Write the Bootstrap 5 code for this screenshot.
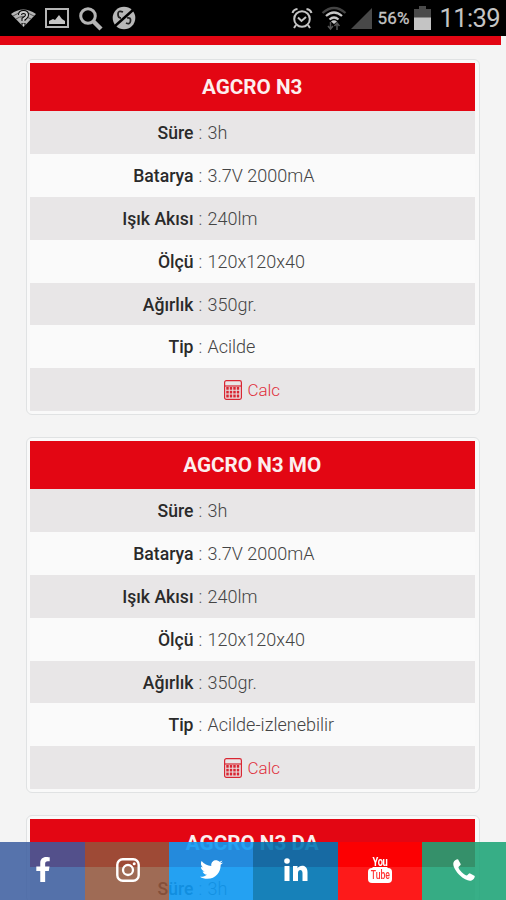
<!DOCTYPE html>
<html lang="tr">
<head>
<meta charset="utf-8">
<meta name="viewport" content="width=device-width, initial-scale=1">
<title>AGCRO</title>
<link href="https://cdn.jsdelivr.net/npm/bootstrap@5.3.0/dist/css/bootstrap.min.css" rel="stylesheet">
<style>
html,body{height:900px;overflow:hidden}
body{background:#f4f4f4;font-family:Roboto,"Liberation Sans",sans-serif;color:#555}
.statusbar{height:36px;background:#000;color:#c4c4c4;padding:0 6px 0 11px}
.statusbar svg{display:block;flex:none}
.pct{font-size:17px;line-height:36px;letter-spacing:.2px;margin-left:5px;width:37px;-webkit-text-stroke:.3px}
.clock{font-size:25.5px;line-height:33px;letter-spacing:-.6px;margin-left:8px}
.strip{height:8.5px;width:501px;background:#e30613}
.products{height:855.5px;overflow:hidden;padding:14.5px 26px 0;gap:22px}
.product{border:1.5px solid #e0e2e3;border-radius:6px;padding:3px 4px 1.5px 2.5px;background:#f9f9f9;height:356px;flex:none}
.product.partial{height:88px}
.product h2{height:48px;line-height:48px;font-size:20.7px;font-weight:700;color:#fceeee;background:#e30613;margin:0}
.spec{height:42.9px;font-size:18px;line-height:44.5px;background:#fafafa}
.spec:nth-child(even){background:#e8e6e7}
.spec dt{width:164px;font-weight:500;font-size:17.6px;color:#2a2a2a;text-align:right}
.spec .colon{width:14px;padding-left:5px;font-weight:300}
.spec dd{margin:0;font-weight:300;color:#444}
.calc{color:#e0303c;font-weight:300;gap:5px;text-decoration:none;font-size:17px}
.partial .spec{height:33px;overflow:hidden}
.social{height:58.5px}
.social a{flex:1 1 0;color:#fff;padding:0 0 2px 1px}
.social a:first-child{flex:0 0 85px}
.fb{background:rgba(59,93,160,.86)}
.ig{background:rgba(147,86,60,.86)}
.tw{background:rgba(14,153,243,.9)}
.li{background:rgba(0,117,180,.9)}
.yt{background:rgba(255,0,0,.89)}
.ph{background:rgba(28,164,118,.88)}
.yt-mark{width:24px;line-height:1}
.yt-mark .top{font-size:13px;font-weight:700;line-height:12px;letter-spacing:-.5px;transform:scaleX(.72)}
.yt-mark .tube{font-size:12px;font-weight:500;line-height:15px;height:15px;border-radius:4px;background:#fff;color:#f33}
.yt-mark .tube span{display:inline-block;transform:scaleX(.72);margin:0 -4px}
</style>
<script src="https://cdn.jsdelivr.net/npm/bootstrap@5.3.0/dist/js/bootstrap.bundle.min.js"></script>
</head>
<body>
<header class="statusbar d-flex align-items-center">
  <svg width="25" height="20" viewBox="0 0 25 20"><path d="M0 6Q12-3 25 6L12.500 19Z" fill="#b5b5b5"/><path d="M2 8Q12 1 23 8M5 11Q12 6 20 11" fill="none" stroke="#555" stroke-width="1"/><path d="M9 7Q9 4 12.500 4T16 7Q16 9 12.500 11V13M12.500 15V18" fill="none" stroke="#000" stroke-width="4"/><path d="M9 7Q9 4 12.500 4T16 7Q16 9 12.500 11V13M12.500 15.500V18" fill="none" stroke="#ccc" stroke-width="2"/></svg>
  <svg class="ms-2" width="26" height="22" viewBox="0 0 26 22"><path d="M2 2H24V20H2Z" fill="none" stroke="#b5b5b5" stroke-width="2"/><path d="M5 17V14L9 12 11 13 15 8 18 12 21 14V17Z" fill="#c4c4c4"/></svg>
  <svg class="ms-2" width="26" height="25" viewBox="0 0 26 25"><circle cx="10" cy="10" r="7.300" fill="none" stroke="#b5b5b5" stroke-width="3"/><path d="M15 15L23 23" stroke="#b5b5b5" stroke-width="4.500"/></svg>
  <svg class="ms-2" width="24" height="24" viewBox="0 0 24 24"><circle cx="12" cy="12" r="11.300" fill="#b8b8b8"/><path d="M3 20L21 4" stroke="#000" stroke-width="2.500"/><path d="M11 6Q6 4 6 8T9 12M14 17Q18 19 18.500 15T15 12" fill="none" stroke="#222" stroke-width="1.800"/></svg>
  <svg class="ms-auto" width="22" height="23" viewBox="0 0 22 23"><g fill="none" stroke="#c4c4c4" stroke-width="2"><circle cx="11" cy="12" r="7.800"/><path d="M7 10.500L10.500 14 15 10M1.500 6Q2.500 2.500 6.500 2M20.500 6Q19.500 2.500 15.500 2M5 18L3 21M17 18L19 21"/></g></svg>
  <svg class="ms-2" width="26" height="26" viewBox="0 0 26 26"><g fill="none" stroke-width="2.300"><path d="M1.500 8Q13-2 24.500 8" stroke="#444"/><path d="M5 11Q13 4 21 11M8.500 14.500Q13 10.500 17.500 14.500" stroke="#c8c8c8"/></g><path d="M10 16.500Q13 14 16 16.500L13 19Z" fill="#c8c8c8"/><path d="M9.500 17V23M7 21L9.500 24 12 21M16 25V19M13.500 21L16 18 18.500 21" fill="none" stroke="#555" stroke-width="1.500"/></svg>
  <svg class="ms-1" width="21" height="21" viewBox="0 0 21 21"><path d="M21 0V21H0Z" fill="#484848"/></svg>
  <span class="pct">56%</span>
  <svg width="17" height="24" viewBox="0 0 17 24"><path d="M5 0H12V3H17V12H0V3H5Z" fill="#4a4a4a"/><path d="M0 11.500H17V24H0Z" fill="#c4c4c4"/></svg>
  <span class="clock">11:39</span>
</header>
<div class="strip"></div>
<main class="products d-flex flex-column">
  <section class="product">
    <h2 class="text-center"><span>AGCRO N3</span></h2>
    <div class="spec d-flex"><dt>Süre</dt><span class="colon">:</span><dd>3h</dd></div>
    <div class="spec d-flex"><dt>Batarya</dt><span class="colon">:</span><dd>3.7V 2000mA</dd></div>
    <div class="spec d-flex"><dt>Işık Akısı</dt><span class="colon">:</span><dd>240lm</dd></div>
    <div class="spec d-flex"><dt>Ölçü</dt><span class="colon">:</span><dd>120x120x40</dd></div>
    <div class="spec d-flex"><dt>Ağırlık</dt><span class="colon">:</span><dd>350gr.</dd></div>
    <div class="spec d-flex"><dt>Tip</dt><span class="colon">:</span><dd>Acilde</dd></div>
    <div class="spec d-flex justify-content-center"><a href="#" class="calc d-flex align-items-center"><svg width="18" height="20" viewBox="0 0 18 20"><g fill="none" stroke="#d92632" stroke-width="1.200"><rect x=".6" y=".6" width="16.800" height="18.800" rx="1.800"/><path d="M1 6H17"/></g><path d="M3.500 7V18M7 7V18M10.500 7V18M14 7V18" stroke="#d92632" stroke-width="2.500" stroke-dasharray="2.800 1"/></svg><span>Calc</span></a></div>
  </section>
  <section class="product">
    <h2 class="text-center"><span>AGCRO N3 MO</span></h2>
    <div class="spec d-flex"><dt>Süre</dt><span class="colon">:</span><dd>3h</dd></div>
    <div class="spec d-flex"><dt>Batarya</dt><span class="colon">:</span><dd>3.7V 2000mA</dd></div>
    <div class="spec d-flex"><dt>Işık Akısı</dt><span class="colon">:</span><dd>240lm</dd></div>
    <div class="spec d-flex"><dt>Ölçü</dt><span class="colon">:</span><dd>120x120x40</dd></div>
    <div class="spec d-flex"><dt>Ağırlık</dt><span class="colon">:</span><dd>350gr.</dd></div>
    <div class="spec d-flex"><dt>Tip</dt><span class="colon">:</span><dd>Acilde-izlenebilir</dd></div>
    <div class="spec d-flex justify-content-center"><a href="#" class="calc d-flex align-items-center"><svg width="18" height="20" viewBox="0 0 18 20"><g fill="none" stroke="#d92632" stroke-width="1.200"><rect x=".6" y=".6" width="16.800" height="18.800" rx="1.800"/><path d="M1 6H17"/></g><path d="M3.500 7V18M7 7V18M10.500 7V18M14 7V18" stroke="#d92632" stroke-width="2.500" stroke-dasharray="2.800 1"/></svg><span>Calc</span></a></div>
  </section>
  <section class="product partial">
    <h2 class="text-center"><span>AGCRO N3 DA</span></h2>
    <div class="spec d-flex"><dt>Süre</dt><span class="colon">:</span><dd>3h</dd></div>
  </section>
</main>
<nav class="social fixed-bottom d-flex">
  <a href="#" aria-label="Facebook" class="fb d-flex align-items-center justify-content-center"><svg width="16" height="25" viewBox="0 0 320 512" fill="currentColor"><path d="M279 288l14-93h-89v-60c0-25 13-50 52-50h41V6S260 0 225 0c-73 0-121 44-121 125v70H23v93h81v224h100V288z"/></svg></a>
  <a href="#" aria-label="Instagram" class="ig d-flex align-items-center justify-content-center"><svg width="24" height="24" viewBox="0 0 24 24"><rect x="1.300" y="1.300" width="21.400" height="21.400" rx="5.500" fill="none" stroke="#fff" stroke-width="2.400"/><circle cx="12" cy="12" r="5" fill="none" stroke="#fff" stroke-width="2.300"/><circle cx="18.200" cy="5.800" r="1.500" fill="#fff"/></svg></a>
  <a href="#" aria-label="Twitter" class="tw d-flex align-items-center justify-content-center"><svg width="23" height="23" viewBox="0 0 512 512" fill="currentColor"><path d="M459.370 151.716c.325 4.548.325 9.097.325 13.645 0 138.720-105.583 298.558-298.558 298.558-59.452 0-114.680-17.219-161.137-47.106 8.447.974 16.568 1.299 25.340 1.299 49.055 0 94.213-16.568 130.274-44.832-46.132-.975-84.792-31.188-98.112-72.772 6.498.974 12.995 1.624 19.818 1.624 9.421 0 18.843-1.300 27.614-3.573-48.081-9.747-84.143-51.980-84.143-102.985v-1.299c13.969 7.797 30.214 12.670 47.431 13.319-28.264-18.843-46.781-51.005-46.781-87.391 0-19.492 5.197-37.360 14.294-52.954 51.655 63.675 129.300 105.258 216.365 109.807-1.624-7.797-2.599-15.918-2.599-24.040 0-57.828 46.782-104.934 104.934-104.934 30.213 0 57.502 12.670 76.670 33.137 23.715-4.548 46.456-13.320 66.599-25.340-7.798 24.366-24.366 44.833-46.132 57.827 21.117-2.273 41.584-8.122 60.426-16.243-14.292 20.791-32.161 39.308-52.628 54.253z"/></svg></a>
  <a href="#" aria-label="LinkedIn" class="li d-flex align-items-center justify-content-center"><svg width="24" height="24" viewBox="0 0 24 24" fill="currentColor"><circle cx="3" cy="3" r="2.800"/><path d="M.5 8H5.500V23H.5ZM9 8H13.500V10.200C15.500 6.500 23.500 6.300 23.500 14V23H18.500V15C18.500 11 14 11.200 14 15V23H9Z"/></svg></a>
  <a href="#" aria-label="YouTube" class="yt d-flex align-items-center justify-content-center"><span class="yt-mark d-flex flex-column text-center"><span class="top">You</span><span class="tube"><span>Tube</span></span></span></a>
  <a href="#" aria-label="Telefon" class="ph d-flex align-items-center justify-content-center"><svg width="22" height="22" viewBox="0 0 22 22" fill="currentColor"><path d="M.5 3.500C1 1.500 3 .3 5 .2L7.800 5.300C7.500 6.800 5.500 7.500 5.400 8.500C6.500 11.500 10.500 15.500 13.500 16.600C14.600 16.500 15.300 14.500 16.700 14.200L21.800 17C21.700 19 20.500 21 18.500 21.500C15.500 22.300 11 20.500 7 16.500C2 11.500-.5 6.500.5 3.500Z"/></svg></a>
</nav>
</body>
</html>
